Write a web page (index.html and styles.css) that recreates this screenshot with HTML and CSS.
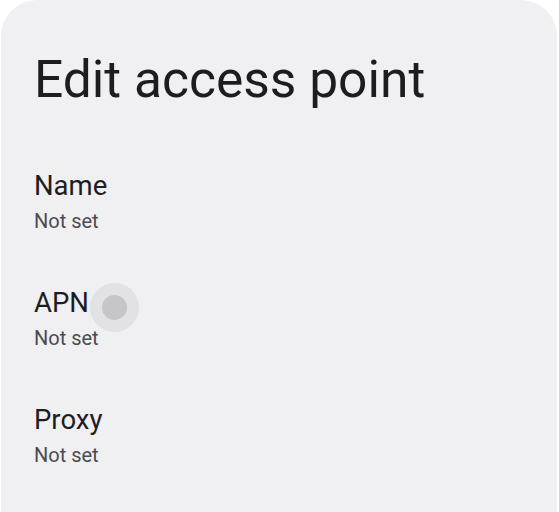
FILE: index.html
```html
<!DOCTYPE html>
<html lang="en">
<head>
<meta charset="utf-8">
<title>Edit access point</title>
<link rel="stylesheet" href="styles.css">
</head>
<body>
<main class="sheet">
  <h1 class="title">Edit access point</h1>
  <ul class="prefs">
    <li class="pref">
      <div class="pref-label">Name</div>
      <div class="pref-value">Not set</div>
    </li>
    <li class="pref">
      <div class="pref-label">APN</div>
      <div class="pref-value">Not set</div>
      <span class="ripple"><span class="ripple-dot"></span></span>
    </li>
    <li class="pref">
      <div class="pref-label">Proxy</div>
      <div class="pref-value">Not set</div>
    </li>
  </ul>
</main>
</body>
</html>
```

FILE: styles.css
```css
html, body {
  margin: 0;
  padding: 0;
  background: #ffffff;
  height: 100%;
  overflow: hidden;
}

body {
  font-family: Roboto, "Noto Sans", sans-serif;
}

.sheet {
  margin: 0 2px 0 1px;
  min-height: 600px;
  background: #f0f0f3;
  border-radius: 36px 36px 0 0;
  padding: 50px 33px 0 33px;
  box-sizing: border-box;
}

.title {
  margin: 0 0 32px 0;
  font-size: 51.5px;
  line-height: 60px;
  font-weight: 400;
  color: #1d1d1f;
  letter-spacing: 0;
}

.prefs {
  list-style: none;
  margin: 0;
  padding: 0;
}

.pref {
  position: relative;
  padding: 28px 0 26px;
  height: 63px;
}

.pref-label {
  font-size: 27.5px;
  line-height: 32px;
  color: #1d1d1f;
  margin-bottom: 7px;
}

.pref-value {
  font-size: 20px;
  line-height: 24px;
  color: #4b4b50;
}

.ripple {
  position: absolute;
  left: 56px;
  top: 24px;
  width: 49px;
  height: 49px;
  border-radius: 50%;
  background: #e2e2e4;
  display: flex;
  align-items: center;
  justify-content: center;
}

.ripple-dot {
  width: 25px;
  height: 25px;
  border-radius: 50%;
  background: #c5c5ca;
}
```
